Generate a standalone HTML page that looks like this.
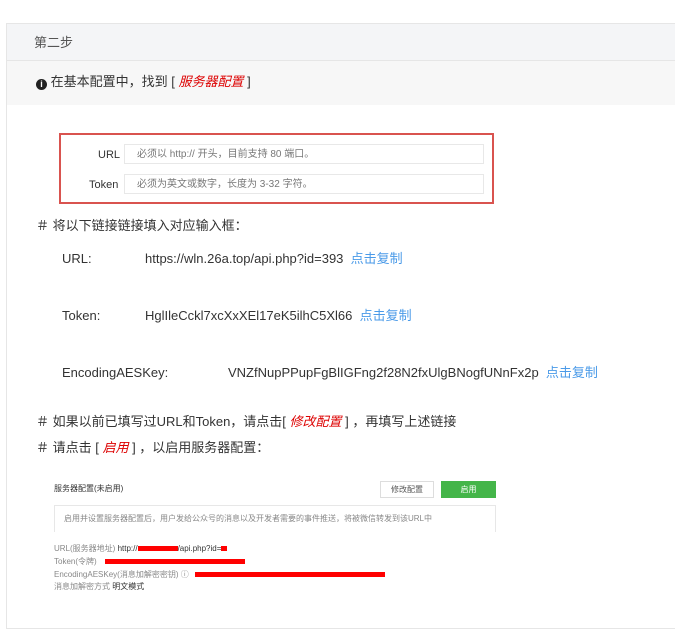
<!DOCTYPE html>
<html><head><meta charset="utf-8"><style>
*{margin:0;padding:0;box-sizing:border-box}
body{width:675px;height:637px;background:#fff;font-family:"Liberation Sans","Noto Sans CJK SC",sans-serif;color:#333;position:relative;overflow:hidden;font-size:13px;line-height:16px}
.a{position:absolute;white-space:nowrap;line-height:16px}
.panel{position:absolute;left:6px;top:23px;width:680px;height:606px;border:1px solid #e6e6e6;border-right:none}
.hd{position:absolute;left:7px;top:24px;width:670px;height:37px;background:#f4f5f7;border-bottom:1px solid #e6e6e6}
.info{position:absolute;left:7px;top:61px;width:670px;height:44px;background:#f7f7f7}
.red{color:#d00;font-style:italic}
.blue{color:#4a9ae8}
.inp{position:absolute;left:124px;width:360px;height:20px;border:1px solid #e8e8e8;font-size:10px;color:#777;padding:2px 0 0 12px}
.sm{font-size:8px;color:#555;line-height:10px}
</style></head><body>
<div class="panel"></div>
<div class="hd"></div>
<div class="a" style="left:34px;top:35px;color:#555">第二步</div>
<div class="info"></div>
<div class="a" style="left:36px;top:74px;font-size:13px"><span style="display:inline-block;width:11px;height:11px;border-radius:50%;background:#222;color:#fff;font-size:9px;text-align:center;line-height:11px;font-weight:bold;vertical-align:-1px">i</span> 在基本配置中，找到 [ <span class="red">服务器配置</span> ]</div>
<div class="a" style="left:59px;top:133px;width:435px;height:71px;border:2px solid #d9534f"></div>
<div class="a" style="left:98px;top:147px;font-size:11px">URL</div>
<div class="a" style="left:89px;top:177px;font-size:11px">Token</div>
<div class="inp" style="top:144px">必须以 http:// 开头，目前支持 80 端口。</div>
<div class="inp" style="top:174px">必须为英文或数字，长度为 3-32 字符。</div>
<div class="a" style="left:36px;top:218px">＃ 将以下链接链接填入对应输入框：</div>
<div class="a" style="left:62px;top:251px">URL:</div>
<div class="a" style="left:145px;top:251px">https://wln.26a.top/api.php?id=393 &nbsp;<span class="blue">点击复制</span></div>
<div class="a" style="left:62px;top:308px">Token:</div>
<div class="a" style="left:145px;top:308px">HglIleCckl7xcXxXEl17eK5ilhC5Xl66 &nbsp;<span class="blue">点击复制</span></div>
<div class="a" style="left:62px;top:365px">EncodingAESKey:</div>
<div class="a" style="left:228px;top:365px">VNZfNupPPupFgBlIGFng2f28N2fxUlgBNogfUNnFx2p &nbsp;<span class="blue">点击复制</span></div>
<div class="a" style="left:36px;top:414px">＃ 如果以前已填写过URL和Token，请点击[ <span class="red">修改配置</span> ] ，再填写上述链接</div>
<div class="a" style="left:36px;top:440px">＃ 请点击 [ <span class="red">启用</span> ] ，以启用服务器配置：</div>
<div class="a sm" style="left:54px;top:484px;color:#333;line-height:10px">服务器配置(未启用)</div>
<div class="a sm" style="left:380px;top:481px;width:54px;height:17px;border:1px solid #ddd;text-align:center;line-height:15px">修改配置</div>
<div class="a sm" style="left:441px;top:481px;width:55px;height:17px;background:#44b549;color:#fff;text-align:center;line-height:17px">启用</div>
<div class="a" style="left:54px;top:505px;width:442px;height:27px;border:1px solid #e7e7e7;border-bottom:none"></div>
<div class="a sm" style="left:64px;top:514px;color:#888;line-height:10px">启用并设置服务器配置后，用户发给公众号的消息以及开发者需要的事件推送，将被微信转发到该URL中</div>
<div class="a sm" style="left:54px;top:544px;color:#888;line-height:10px">URL(服务器地址) <span style="color:#333">http://<span style="background:#f00;display:inline-block;width:40px;height:5px"></span>/api.php?id=<span style="background:#f00;display:inline-block;width:6px;height:5px"></span></span></div>
<div class="a sm" style="left:54px;top:557px;color:#888;line-height:10px">Token(令牌) <span style="background:#f00;display:inline-block;width:140px;height:5px;margin-left:6px"></span></div>
<div class="a sm" style="left:54px;top:570px;color:#888;line-height:10px">EncodingAESKey(消息加解密密钥) ⓘ <span style="background:#f00;display:inline-block;width:190px;height:5px;margin-left:4px"></span></div>
<div class="a sm" style="left:54px;top:582px;color:#888;line-height:10px">消息加解密方式 <span style="color:#333">明文模式</span></div>
</body></html>
